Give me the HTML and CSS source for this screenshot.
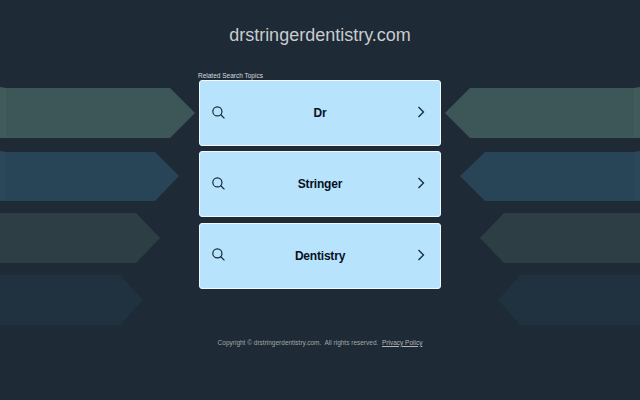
FILE: index.html
```html
<!DOCTYPE html>
<html lang="en">
<head>
    <meta charset="UTF-8">
    <meta name="viewport" content="width=device-width, initial-scale=1.0">
    <title>drstringerdentistry.com</title>
    <link rel="stylesheet" href="styles.css">
</head>
<body>
    <!-- декоративные стрелки за карточками -->
    <svg class="arrows" width="640" height="400" viewBox="0 0 640 400" aria-hidden="true">
        <polygon fill="#3d5657" points="0,88 170,88 195,113 170,138 0,138"/>
        <polygon fill="#415a5a" points="0,87 6,88 6,137 0,138"/>
        <polygon fill="#284457" points="0,152 155,152 179,176 155,201 0,201"/>
        <polygon fill="#2b4759" points="0,151 6,152 6,200 0,201"/>
        <polygon fill="#2d3f45" points="0,213 136,213 160,238 136,263 0,263"/>
        <polygon fill="#20323f" points="0,275 120,275 143,300 120,325 0,325"/>
        <polygon fill="#3d5657" points="640,88 470,88 445,113 470,138 640,138"/>
        <polygon fill="#415a5a" points="640,87 634,88 634,137 640,138"/>
        <polygon fill="#284457" points="640,152 485,152 460,176 485,201 640,201"/>
        <polygon fill="#2b4759" points="640,151 634,152 634,200 640,201"/>
        <polygon fill="#2d3f45" points="640,213 504,213 480,238 504,263 640,263"/>
        <polygon fill="#20323f" points="640,275 520,275 498,300 520,325 640,325"/>
    </svg>

    <div class="page">
        <h1 class="domain">drstringerdentistry.com</h1>

        <div class="topics">
            <div class="topics-label">Related Search Topics</div>

            <a class="topic" href="#">
                <svg class="icon" width="13" height="13" viewBox="0 0 14 14"><circle cx="5.8" cy="5.8" r="4.9"/><line x1="9.2" y1="9.2" x2="13.4" y2="13.4"/></svg>
                <span class="topic-name">Dr</span>
                <svg class="icon icon-next" width="8" height="12" viewBox="0 0 8 12"><polyline points="1.5,1 6.5,6 1.5,11"/></svg>
            </a>
            <a class="topic" href="#">
                <svg class="icon" width="13" height="13" viewBox="0 0 14 14"><circle cx="5.8" cy="5.8" r="4.9"/><line x1="9.2" y1="9.2" x2="13.4" y2="13.4"/></svg>
                <span class="topic-name">Stringer</span>
                <svg class="icon icon-next" width="8" height="12" viewBox="0 0 8 12"><polyline points="1.5,1 6.5,6 1.5,11"/></svg>
            </a>
            <a class="topic" href="#">
                <svg class="icon" width="13" height="13" viewBox="0 0 14 14"><circle cx="5.8" cy="5.8" r="4.9"/><line x1="9.2" y1="9.2" x2="13.4" y2="13.4"/></svg>
                <span class="topic-name">Dentistry</span>
                <svg class="icon icon-next" width="8" height="12" viewBox="0 0 8 12"><polyline points="1.5,1 6.5,6 1.5,11"/></svg>
            </a>
        </div>

        <div class="footer">Copyright © drstringerdentistry.com.&nbsp; All rights reserved. &nbsp;<a href="#">Privacy Policy</a></div>
    </div>
</body>
</html>
```

FILE: styles.css
```css
body {
    margin: 0;
    padding: 0;
    height: 400px;
    overflow: hidden;
    background-color: #1e2a35;
    font-family: "Liberation Sans", Arial, sans-serif;
}

.arrows {
    position: absolute;
    top: 0;
    left: 0;
}

.page {
    position: relative;
    display: flex;
    flex-direction: column;
    align-items: center;
    padding-top: 23px;
}

.domain {
    margin: 0;
    font-size: 18px;
    line-height: 24px;
    font-weight: normal;
    color: #c8ccd0;
}

.topics {
    width: 242px;
    margin-top: 25px;
    display: flex;
    flex-direction: column;
    gap: 5.4px;
}

.topics-label {
    height: 8px;
    margin: 0 0 -5.4px -1px;
    font-size: 6.5px;
    line-height: 8px;
    color: #d8dbde;
}

.topic {
    box-sizing: border-box;
    height: 66px;
    padding: 0 13px 2px 13px;
    display: grid;
    grid-template-columns: 1fr auto 1fr;
    align-items: center;
    background-color: #b7e3fd;
    border: 1.5px solid #f2f8fc;
    border-radius: 3px;
    text-decoration: none;
}

.topic-name {
    padding-top: 2px;
    font-size: 12px;
    letter-spacing: -0.2px;
    font-weight: bold;
    color: #07121c;
}

.icon {
    fill: none;
    stroke: #14293a;
    stroke-width: 1.3;
}

.icon:first-child {
    margin-left: -1px;
}

.icon-next {
    justify-self: end;
    margin-right: 2px;
}

.footer {
    margin-top: 49px;
    font-size: 6.5px;
    line-height: 10px;
    color: #a3a7ab;
}

.footer a {
    color: #b0b4b8;
}
```
